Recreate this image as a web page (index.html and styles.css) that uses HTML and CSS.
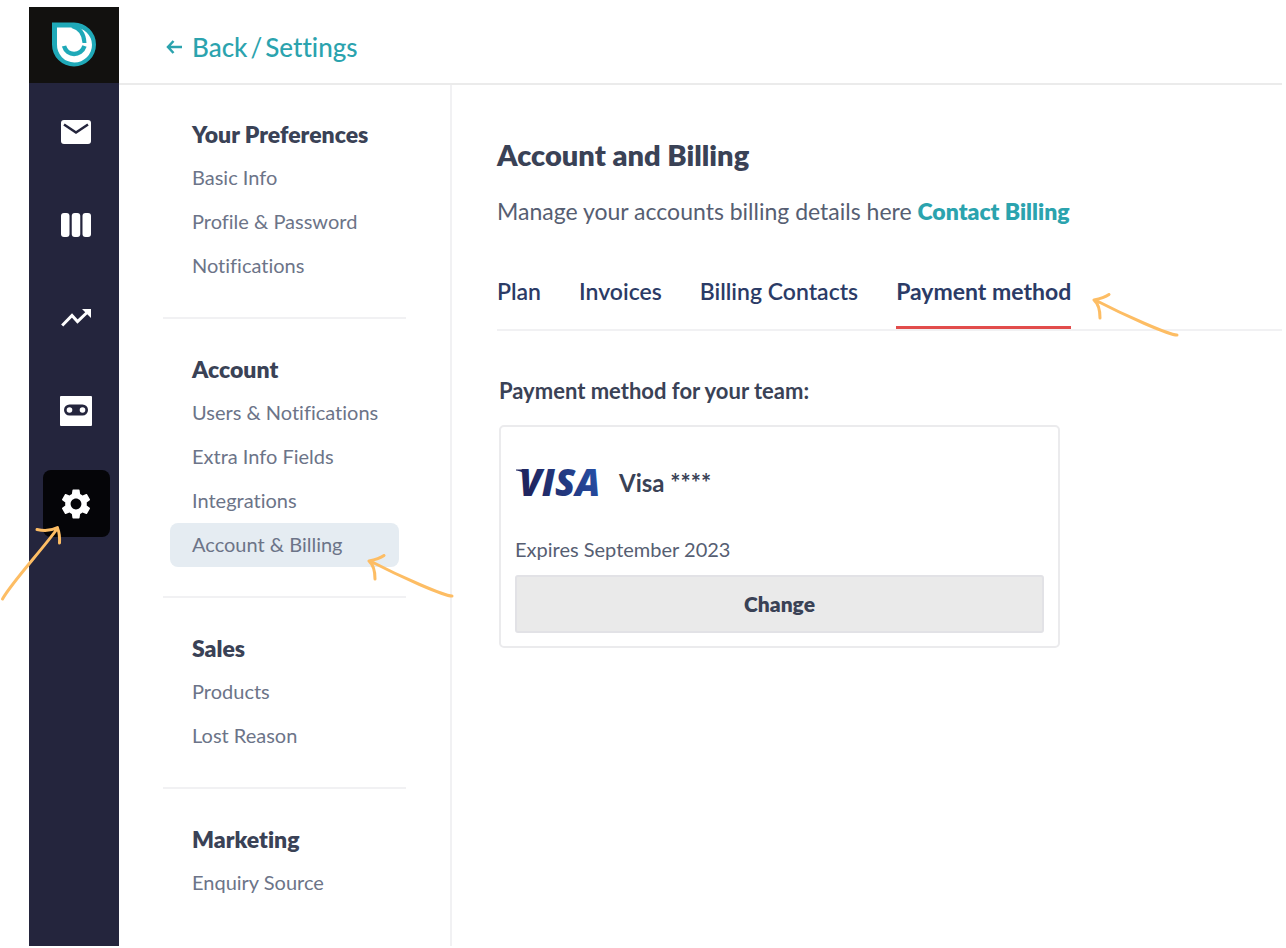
FILE: index.html
```html
<!DOCTYPE html>
<html lang="en">

<head>
    <meta charset="UTF-8">
    <meta name="viewport" content="width=device-width, initial-scale=1.0">
    <title>Settings - Account and Billing</title>
    <link rel="stylesheet" href="styles.css">
</head>

<body>
    <!-- Shared arrow, used for the menu item and the tab -->
    <svg width="0" height="0" class="symbols" aria-hidden="true">
        <symbol id="arrow-left" viewBox="0 0 90 46">
            <path d="M86 42 C78 42 35 23 4 7 M3 7 Q13 5 18 1.500 M3 7 Q9 12 9 25" />
        </symbol>
    </svg>

    <div class="app">
        <aside class="rail">
            <a class="logo" href="#" aria-label="Home">
                <svg width="44" height="46" viewBox="0 0 44 46">
                    <path d="M0 0.500H22A22 22 0 1 1 0 22.500Z" fill="#1fa9b8" />
                    <path d="M5 5.500H22A17.500 17.500 0 1 1 5 22.500Z" fill="#fff" />
                    <path d="M20 4 C28 6 32 12 32.500 21" fill="none" stroke="#1fa9b8" stroke-width="4" />
                    <path d="M12 24 C15 34.500 29 34.500 32.500 24" fill="none" stroke="#1fa9b8" stroke-width="4.500" />
                </svg>
            </a>
            <nav class="rail-nav" aria-label="Main">
                <a class="rail-item" href="#" aria-label="Inbox">
                    <svg width="30" height="24" viewBox="0 0 30 24">
                        <rect width="30" height="24" rx="3" fill="#fff" />
                        <path d="M3 4.500 15 12.500 27 4.500" fill="none" stroke="#24253d" stroke-width="2.500" />
                    </svg>
                </a>
                <a class="rail-item" href="#" aria-label="Pipeline">
                    <svg width="30" height="24" viewBox="0 0 30 24" fill="#fff">
                        <rect width="8.500" height="24" rx="3" />
                        <rect x="10.750" width="8.500" height="24" rx="3" />
                        <rect x="21.500" width="8.500" height="24" rx="3" />
                    </svg>
                </a>
                <a class="rail-item" href="#" aria-label="Reports">
                    <svg width="30" height="18" viewBox="0 0 30 18">
                        <path d="M1.200 16.500 11 6.500 16.500 12.500 26 3.500" fill="none" stroke="#fff" stroke-width="3" />
                        <path d="M21 0H30V9Z" fill="#fff" />
                    </svg>
                </a>
                <a class="rail-item" href="#" aria-label="Assistant">
                    <svg width="32" height="30" viewBox="0 0 32 30">
                        <rect width="32" height="30" rx="1" fill="#fff" />
                        <rect x="4" y="8.500" width="24" height="11" rx="5.500" fill="#24253d" />
                        <circle cx="9.500" cy="14" r="2.800" fill="#fff" />
                        <circle cx="22.500" cy="14" r="2.800" fill="#fff" />
                    </svg>
                </a>
                <a class="rail-item active" href="#" aria-label="Settings">
                    <svg width="36" height="36" viewBox="0 0 24 24" fill="#fff">
                        <path d="M19.140 12.940c.04-.3.06-.61.06-.94 0-.32-.02-.64-.07-.94l2.030-1.580c.18-.14.23-.41.12-.61l-1.920-3.320c-.12-.22-.37-.29-.59-.22l-2.390.96c-.5-.38-1.030-.7-1.620-.94l-.36-2.540c-.04-.24-.24-.41-.48-.41h-3.840c-.24 0-.43.17-.47.41l-.36 2.540c-.59.24-1.130.57-1.620.94l-2.390-.96c-.22-.08-.47 0-.59.22L2.740 8.870c-.12.21-.08.47.12.61l2.030 1.580c-.05.3-.09.63-.09.94s.02.64.07.94l-2.030 1.580c-.18.14-.23.41-.12.61l1.920 3.320c.12.22.37.29.59.22l2.390-.96c.5.38 1.030.7 1.620.94l.36 2.540c.05.24.24.41.48.41h3.840c.24 0 .44-.17.47-.41l.36-2.540c.59-.24 1.130-.56 1.620-.94l2.390.96c.22.08.47 0 .59-.22l1.920-3.320c.12-.22.07-.47-.12-.61l-2.010-1.580zM12 15.600c-1.980 0-3.600-1.620-3.600-3.600s1.620-3.600 3.600-3.600 3.600 1.620 3.600 3.600-1.620 3.600-3.600 3.600z" />
                    </svg>
                    <svg class="arrow arrow-rail" width="62" height="76" viewBox="0 0 62 76" aria-hidden="true">
                        <path d="M2.500 73 C12 56 42 24 57 3 M37 3.500 Q49 6 57.500 1.500 M57.500 2 Q60 8 59.500 17" />
                    </svg>
                </a>
            </nav>
        </aside>

        <header class="topbar">
            <a href="#" class="back">
                <svg width="16" height="14" viewBox="0 0 16 14" fill="none" stroke="currentColor" stroke-width="2.500" aria-hidden="true">
                    <path d="M16 7H2M7.500 1 2 7 7.500 13" />
                </svg>
                Back
            </a>
            <span class="slash">/</span>
            <a href="#">Settings</a>
        </header>

        <nav class="menu" aria-label="Settings">
            <section>
                <h2>Your Preferences</h2>
                <ul>
                    <li><a href="#">Basic Info</a></li>
                    <li><a href="#">Profile &amp; Password</a></li>
                    <li><a href="#">Notifications</a></li>
                </ul>
            </section>
            <section>
                <h2>Account</h2>
                <ul>
                    <li><a href="#">Users &amp; Notifications</a></li>
                    <li><a href="#">Extra Info Fields</a></li>
                    <li><a href="#">Integrations</a></li>
                    <li>
                        <a href="#" class="active">Account &amp; Billing</a>
                        <svg class="arrow arrow-menu" width="90" height="46" aria-hidden="true"><use href="#arrow-left" /></svg>
                    </li>
                </ul>
            </section>
            <section>
                <h2>Sales</h2>
                <ul>
                    <li><a href="#">Products</a></li>
                    <li><a href="#">Lost Reason</a></li>
                </ul>
            </section>
            <section>
                <h2>Marketing</h2>
                <ul>
                    <li><a href="#">Enquiry Source</a></li>
                </ul>
            </section>
        </nav>

        <main>
            <h1>Account and Billing</h1>
            <p class="intro">Manage your accounts billing details here <a href="#">Contact Billing</a></p>

            <nav class="tabs" aria-label="Billing">
                <a href="#">Plan</a>
                <a href="#">Invoices</a>
                <a href="#">Billing Contacts</a>
                <a href="#" class="active">
                    Payment method
                    <svg class="arrow arrow-tab" width="90" height="46" aria-hidden="true"><use href="#arrow-left" /></svg>
                </a>
            </nav>

            <div class="payment">
                <h3>Payment method for your team:</h3>
                <div class="card">
                    <div class="card-brand">
                        <svg width="84" height="36" viewBox="0 0 84 36" aria-hidden="true">
                            <defs>
                                <linearGradient id="visa" gradientUnits="userSpaceOnUse" x1="0" y1="32" x2="84" y2="0">
                                    <stop offset="0.200" stop-color="#20255f" />
                                    <stop offset="1" stop-color="#2650a8" />
                                </linearGradient>
                            </defs>
                            <path d="M1 4.500H11L13 14C10 8 6 6 1 5.500Z" fill="url(#visa)" />
                            <text x="4" y="31" fill="url(#visa)">VISA</text>
                        </svg>
                        <strong>Visa ****</strong>
                    </div>
                    <p>Expires September 2023</p>
                    <button type="button">Change</button>
                </div>
            </div>
        </main>
    </div>
</body>

</html>
```

FILE: styles.css
```css
* {
    box-sizing: border-box;
}

body {
    margin: 0;
    padding: 7px 4px 2px 29px;
    background: #fff;
    color: #3a4256;
    font-family: Lato, 'Open Sans', sans-serif;
    font-size: 20px;
    line-height: 24px;
    font-variant-ligatures: none;
}

a {
    color: inherit;
    text-decoration: none;
}

h1, h2, h3, p, ul {
    margin: 0;
    padding: 0;
}

ul {
    list-style: none;
}

.symbols {
    position: absolute;
}

.app {
    display: grid;
    grid-template-columns: 90px 333px 1fr;
    grid-template-rows: 78px 1fr;
    min-height: calc(100vh - 9px);
}

/* Left rail */
.rail {
    grid-row: 1 / 3;
    background: #24253d;
}

.logo {
    display: flex;
    align-items: center;
    justify-content: center;
    height: 76px;
    background: #12110f;
}

.rail-nav {
    display: flex;
    flex-direction: column;
    align-items: center;
    gap: 26px;
    padding: 15px 0 0 4px;
}

.rail-item {
    position: relative;
    display: flex;
    align-items: center;
    justify-content: center;
    width: 67px;
    height: 67px;
    border-radius: 8px;

    &.active {
        background: #050508;
    }
}

/* Top bar */
.topbar {
    grid-column: 2 / 4;
    display: flex;
    align-items: center;
    gap: 3px;
    padding: 4px 0 0 47px;
    border-bottom: 2px solid #ebebeb;
    color: #2ba3ae;
    font-size: 26px;
    font-weight: 500;
    line-height: 32px;
}

.back {
    display: flex;
    align-items: center;
    gap: 10px;
}

.slash {
    font-weight: normal;
}

/* Settings menu */
.menu {
    padding: 27px 44px 0;
    border-right: 2px solid #f1f1f3;

    section {
        margin-bottom: 28px;
        padding: 0 7px 29px;
        border-bottom: 2px solid #f1f1f3;
    }

    section:last-child {
        margin-bottom: 0;
        border-bottom: 0;
    }

    h2 {
        padding: 10px 0 10px 22px;
        font-size: 23px;
        font-weight: 800;
        line-height: 24px;
    }

    li {
        position: relative;
    }

    a {
        display: block;
        padding: 9px 0 11px 22px;
        border-radius: 8px;
        color: #6c7488;
    }

    a.active {
        background: #e5ecf2;
    }
}

/* Content */
main {
    padding: 54px 0 0 45px;
}

h1 {
    font-size: 29px;
    font-weight: 800;
    line-height: 32px;
}

.intro {
    margin-top: 26px;
    color: #565e72;
    font-size: 23px;
    line-height: 28px;

    a {
        color: #2ba3ae;
        font-weight: 800;
    }
}

.tabs {
    display: flex;
    gap: 38px;
    margin-top: 52px;
    border-bottom: 2px solid #f1f1f3;
    color: #2b3b66;
    font-size: 23px;
    font-weight: 600;
    line-height: 28px;

    a {
        position: relative;
        padding-bottom: 21px;
        border-bottom: 3px solid transparent;
    }

    a.active {
        border-color: #e24c4b;
        font-weight: bold;
    }
}

.payment {
    max-width: 563px;
    padding: 46px 0 0 2px;

    h3 {
        font-size: 22px;
        font-weight: bold;
        line-height: 28px;
    }
}

.card {
    margin-top: 20px;
    padding: 38px 14px 13px;
    border: 2px solid #ebebed;
    border-radius: 5px;

    p {
        margin: 36px 0 14px;
        color: #565e72;
    }

    button {
        display: block;
        width: 100%;
        height: 58px;
        border: 2px solid #e2e2e6;
        border-radius: 3px;
        background: #eaeaea;
        color: inherit;
        font: 800 21px/24px Lato, 'Open Sans', sans-serif;
        cursor: pointer;
    }
}

.card-brand {
    display: flex;
    align-items: center;
    gap: 20px;
    font-size: 24px;

    svg {
        overflow: visible;
    }

    text {
        font: italic 800 37px 'Open Sans', sans-serif;
    }
}

/* Hand drawn arrows */
.arrow {
    position: absolute;
    overflow: visible;
    fill: none;
    stroke: #fdbd64;
    stroke-width: 3;
    stroke-linecap: round;
    pointer-events: none;
}

.arrow-rail {
    top: 56px;
    right: 48px;
}

.arrow-menu {
    top: 31px;
    left: 196px;
}

.arrow-tab {
    top: 16px;
    left: 100%;
    margin-left: 20px;
}
```
